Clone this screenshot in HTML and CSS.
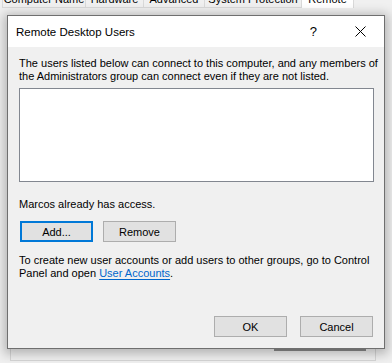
FILE: index.html
```html
<!DOCTYPE html>
<html lang="en">
<head>
    <meta charset="UTF-8">
    <title>Remote Desktop Users</title>
    <link rel="stylesheet" href="styles.css">
</head>
<body>

    <div class="parent-window">
        <div class="tabstrip">
            <div class="tab tab-first">Computer Name</div>
            <div class="tab">Hardware</div>
            <div class="tab">Advanced</div>
            <div class="tab">System Protection</div>
            <div class="tab tab-active">Remote</div>
        </div>
        <div class="tab-page">
            <div class="groupbox">
                <div class="parent-button"></div>
            </div>
        </div>
    </div>

    <div class="dialog">
        <div class="titlebar">
            <span class="title">Remote Desktop Users</span>
            <span class="help">?</span>
            <svg class="close" width="11" height="11" viewBox="0 0 11 11">
                <path d="M0.5 0.5 L10.5 10.5 M10.5 0.5 L0.5 10.5" stroke="#000" stroke-width="1" fill="none"/>
            </svg>
        </div>
        <div class="dialog-body">
            <p class="intro">The users listed below can connect to this computer, and any members of the Administrators group can connect even if they are not listed.</p>
            <div class="listbox"></div>
            <p class="status">Marcos already has access.</p>
            <div class="button-row">
                <button class="btn btn-default">Add...</button>
                <button class="btn">Remove</button>
            </div>
            <p class="hint">To create new user accounts or add users to other groups, go to Control Panel and open <a href="#" class="link">User Accounts</a>.</p>
            <div class="footer">
                <button class="btn">OK</button>
                <button class="btn">Cancel</button>
            </div>
        </div>
    </div>

</body>
</html>
```

FILE: styles.css
```css
*,
::after,
::before {
    margin: 0;
    padding: 0;
    box-sizing: border-box;
}

html {
    font-family: "Liberation Sans", Arial, sans-serif;
    font-size: 11px;
}

body {
    background-color: #f0f0f0;
    width: 392px;
    height: 363px;
    overflow: hidden;
    position: relative;
}

/* parent window behind the dialog */
.tabstrip {
    display: flex;
    align-items: flex-end;
    height: 8px;
    overflow: hidden;
    padding-left: 2px;
}

.tab {
    height: 22px;
    padding-top: 5px;
    line-height: 14px;
    font-size: 11px;
    text-align: center;
    color: #000;
    border: 1px solid #d9d9d9;
    border-left: none;
    background-color: #f0f0f0;
    white-space: nowrap;
}

.tab-first {
    width: 84px;
    border-left: 1px solid #d9d9d9;
}

.tab:nth-child(2) { width: 58px; }
.tab:nth-child(3) { width: 61px; }
.tab:nth-child(4) { width: 97px; }

.tab-active {
    width: 52px;
    background-color: #fff;
    border-bottom: none;
}

.tab-page {
    padding: 10px 16px 2px 10px;
}

.groupbox {
    height: 343px;
    border: 1px solid #d5d5d5;
    display: flex;
    align-items: flex-end;
    justify-content: flex-end;
    padding: 0 9px 9px 0;
}

.parent-button {
    width: 92px;
    height: 22px;
    border: 1px solid #8f8f8f;
    border-bottom: 2px solid #8a8a8a;
    background-color: #e1e1e1;
}

/* modal dialog, drawn on top of the parent window */
.dialog {
    position: absolute;
    left: 7px;
    top: 15px;
    width: 378px;
    height: 334px;
    border: 1px solid #6f6f6f;
    background-color: #f0f0f0;
    box-shadow: 0 2px 10px 3px rgba(0, 0, 0, 0.25);
    display: flex;
    flex-direction: column;
}

.titlebar {
    height: 31px;
    background-color: #fff;
    display: flex;
    align-items: center;
    padding-left: 8px;
    font-size: 11.5px;
}

.title {
    flex: 1;
    padding-top: 1px;
}

.help {
    font-size: 13px;
    margin-right: 38px;
}

.close {
    margin-right: 18px;
}

.dialog-body {
    flex: 1;
    display: flex;
    flex-direction: column;
    padding: 10px 10px 11px 11px;
    line-height: 13px;
}

.intro {
    width: 360px;
}

.listbox {
    margin-top: 5px;
    height: 94px;
    background-color: #fff;
    border: 1px solid #828790;
}

.status {
    margin-top: 16px;
}

.button-row {
    display: flex;
    gap: 10px;
    margin-top: 10px;
    padding-left: 1px;
}

.btn {
    width: 73px;
    height: 21px;
    font-family: inherit;
    font-size: 11px;
    color: #000;
    background-color: #e1e1e1;
    border: 1px solid #adadad;
}

.btn-default {
    border: 2px solid #0078d7;
}

.hint {
    margin-top: 12px;
}

.link {
    color: #0066cc;
    text-decoration: underline;
    text-underline-offset: 2px;
}

.footer {
    margin-top: auto;
    display: flex;
    justify-content: flex-end;
    gap: 13px;
    padding-right: 1px;
}
```
